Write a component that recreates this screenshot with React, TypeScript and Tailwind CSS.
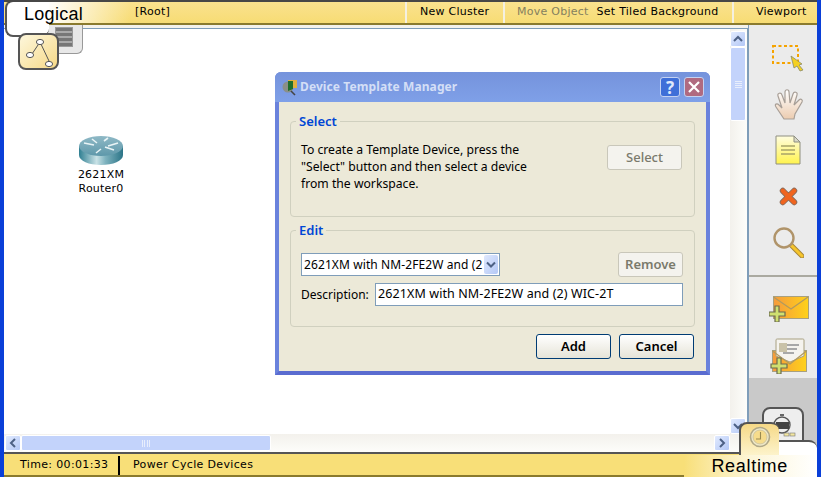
import React from "react";

const ui = "font-['DejaVu_Sans',sans-serif]";
const dlg = "font-['Noto_Sans',sans-serif]";

function ArrowBtn({ dir, className }: { dir: "up" | "down" | "left" | "right"; className?: string }) {
  const paths = {
    up: "M3 9 L7 5 L11 9",
    down: "M3 5 L7 9 L11 5",
    left: "M9 3 L5 7 L9 11",
    right: "M5 3 L9 7 L5 11",
  };
  return (
    <div className={"flex items-center justify-center rounded-[2px] border border-white bg-gradient-to-br from-[#e1eafe] to-[#b4c8f6] " + (className || "")}>
      <svg width="14" height="14" viewBox="0 0 14 14" fill="none">
        <path d={paths[dir]} stroke="#4d6185" strokeWidth="2" />
      </svg>
    </div>
  );
}

function RouterIcon() {
  return (
    <svg width="46" height="31" viewBox="0 0 46 31">
      <defs>
        <linearGradient id="rside" x1="0" x2="1" y1="0" y2="0">
          <stop offset="0" stopColor="#2f7f92" />
          <stop offset="0.4" stopColor="#c9e2e6" />
          <stop offset="0.6" stopColor="#7fb3bf" />
          <stop offset="1" stopColor="#2b7487" />
        </linearGradient>
        <linearGradient id="rtop" x1="0" x2="0" y1="0" y2="1">
          <stop offset="0" stopColor="#8fb9c6" />
          <stop offset="1" stopColor="#5e98aa" />
        </linearGradient>
      </defs>
      <path d="M1 11 V20 C1 26 11 30 23 30 C35 30 45 26 45 20 V11 Z" fill="url(#rside)" />
      <ellipse cx="23" cy="11" rx="22" ry="10" fill="url(#rtop)" />
      <path d="M6 8 L16 10 M40 8 L30 11 M23 14 L18 18 M26 6 L30 3 M27 12 L36 15 M19 8 L14 4" stroke="#e8f3f5" strokeWidth="1.6" />
    </svg>
  );
}

function LogicalIcon() {
  return (
    <svg width="30" height="34" viewBox="0 0 30 34" fill="none">
      <path d="M8 19 L16 7 L25 26" stroke="#555" strokeWidth="1" />
      <ellipse cx="16" cy="7" rx="3.6" ry="2.6" fill="#fff" stroke="#555" />
      <ellipse cx="6" cy="20" rx="3.6" ry="2.6" fill="#fff" stroke="#555" />
      <ellipse cx="25" cy="29" rx="3.6" ry="2.6" fill="#fff" stroke="#555" />
    </svg>
  );
}

function SelectIcon() {
  return (
    <svg width="34" height="28" viewBox="0 0 34 28" fill="none">
      <rect x="2" y="2" width="25" height="17" stroke="#f5a300" strokeWidth="2" strokeDasharray="3 2.5" />
      <path d="M20 12 L31 20 L28 21 L32 26 L29 27 L26 22 L23 24 Z" fill="#f4d020" stroke="#8c8c6a" strokeWidth="0.8" />
    </svg>
  );
}

function HandIcon() {
  return (
    <svg width="32" height="32" viewBox="0 0 32 32">
      <defs>
        <linearGradient id="hnd" x1="0" x2="0" y1="0" y2="1">
          <stop offset="0" stopColor="#ffffff" />
          <stop offset="1" stopColor="#ecccb0" />
        </linearGradient>
      </defs>
      <path d="M12 31 L4 19 C2 16 5 15 7 17 L10 20 L6 8 C5 5 9 4 10 7 L13 15 L13 4 C13 1 17 1 17 4 L18 15 L21 6 C22 3 26 4 25 7 L22 17 L27 12 C29 10 31 12 30 14 L23 26 L22 31 Z" fill="url(#hnd)" stroke="#a89f97" strokeWidth="1.2" />
    </svg>
  );
}

function NoteIcon() {
  return (
    <svg width="26" height="30" viewBox="0 0 26 30" fill="none">
      <defs>
        <linearGradient id="nt" x1="0" x2="0" y1="0" y2="1">
          <stop offset="0" stopColor="#fffde0" />
          <stop offset="1" stopColor="#fff34d" />
        </linearGradient>
      </defs>
      <path d="M1 1 H19 L25 7 V29 H1 Z" fill="url(#nt)" stroke="#8f8f80" />
      <path d="M19 1 V7 H25 Z" fill="#d8d8c8" stroke="#8f8f80" />
      <path d="M6 11 H20 M6 15 H20 M6 19 H20" stroke="#a9a468" strokeWidth="1.4" />
    </svg>
  );
}

function DeleteIcon() {
  return (
    <svg width="19" height="19" viewBox="0 0 20 20">
      <path d="M4 4 L16 16 M16 4 L4 16" stroke="#8a6d5c" strokeWidth="6.4" strokeLinecap="round" />
      <path d="M4 4 L16 16 M16 4 L4 16" stroke="#f0641e" strokeWidth="4.6" strokeLinecap="round" />
    </svg>
  );
}

function ZoomIcon() {
  return (
    <svg width="32" height="32" viewBox="0 0 32 32" fill="none">
      <path d="M18 18 L30 30" stroke="#a8873a" strokeWidth="5" strokeLinecap="round" />
      <path d="M18 18 L30 30" stroke="#f6c52c" strokeWidth="3" strokeLinecap="round" />
      <circle cx="12" cy="12" r="9.5" fill="#ececec" stroke="#b0946a" strokeWidth="2.4" />
    </svg>
  );
}

function Plus({ x, y }: { x: number; y: number }) {
  return (
    <g transform={`translate(${x} ${y})`}>
      <path d="M6 0 H10 V6 H16 V10 H10 V16 H6 V10 H0 V6 H6 Z" fill="#d0e070" stroke="#6b6b50" strokeWidth="1.2" />
    </g>
  );
}

function MailIcon() {
  return (
    <svg width="40" height="26" viewBox="0 0 40 26" fill="none">
      <defs>
        <linearGradient id="ml" x1="0" x2="1" y1="0" y2="0">
          <stop offset="0" stopColor="#f59a3c" />
          <stop offset="1" stopColor="#ffd21a" />
        </linearGradient>
      </defs>
      <rect x="4.5" y="0.5" width="35" height="22" fill="url(#ml)" stroke="#a8a080" />
      <path d="M4.5 1 L22 13 L39 1" stroke="#b09a60" strokeWidth="1.2" />
      <Plus x={0} y={10} />
    </svg>
  );
}

function MailOpenIcon() {
  return (
    <svg width="38" height="36" viewBox="0 0 38 36" fill="none">
      <defs>
        <linearGradient id="mo" x1="0" x2="1" y1="0" y2="0">
          <stop offset="0" stopColor="#f59a3c" />
          <stop offset="1" stopColor="#ffd21a" />
        </linearGradient>
      </defs>
      <rect x="2.5" y="12.5" width="34" height="21" fill="url(#mo)" stroke="#a8a080" />
      <path d="M6 18 V2 C6 1 7 1 8 1 H32 C33 1 34 1 34 2 V18 L20 24 Z" fill="#f5f3ee" stroke="#a8a080" />
      <rect x="9" y="5" width="8" height="9" fill="#c9c2a8" />
      <path d="M17 7 H29 M17 11 H27 M13 15 H24" stroke="#a8a8a8" strokeWidth="2" />
      <path d="M2.5 13 L20 26 L36.5 13" stroke="#b09a60" strokeWidth="1.2" />
      <Plus x={1} y={20} />
    </svg>
  );
}

function StopwatchIcon() {
  return (
    <svg width="26" height="26" viewBox="0 0 26 26" fill="none">
      <circle cx="12" cy="12" r="8" fill="#eee" stroke="#555" strokeWidth="1.4" />
      <rect x="6" y="9" width="13" height="7" fill="#444" />
      <rect x="10" y="1" width="4" height="2" fill="#666" />
      <rect x="14" y="20" width="5" height="3" fill="#f2e6a0" stroke="#777" strokeWidth="0.6" />
      <rect x="20" y="20" width="5" height="3" fill="#f2e6a0" stroke="#777" strokeWidth="0.6" />
    </svg>
  );
}

function ClockIcon() {
  return (
    <svg width="22" height="22" viewBox="0 0 22 22" fill="none">
      <circle cx="11" cy="11" r="9.5" fill="#efe9c8" stroke="#b0a888" strokeWidth="1.6" />
      <circle cx="11" cy="11" r="7" fill="#f6dc8c" stroke="#c8c0a0" strokeWidth="0.8" />
      <path d="M11.5 6 V13 H7" stroke="#9a8a50" strokeWidth="1.1" />
    </svg>
  );
}

function AppIcon() {
  return (
    <svg width="18" height="17" viewBox="0 0 18 17" fill="none">
      <circle cx="7" cy="8" r="5.5" fill="#8b8f88" />
      <path d="M10 12 L14 16" stroke="#444" strokeWidth="1.6" />
      <rect x="7" y="1" width="9" height="8" fill="#e0b040" />
      <path d="M7 2 H12 V10 L7 12 Z" fill="#1f6e2c" />
    </svg>
  );
}

function GroupBox({ title, className, children }: { title: string; className: string; children: React.ReactNode }) {
  return (
    <div className={"relative rounded-[4px] border border-[#d0d0bf] " + className}>
      <span className="absolute left-[5px] top-[-10px] bg-[#ece9d8] px-[3px] text-[13px] font-semibold leading-[18px] text-[#0046d5]">
        {title}
      </span>
      {children}
    </div>
  );
}

function Dialog() {
  return (
    <div className={"absolute left-[271px] top-[72px] flex h-[303px] w-[435px] flex-col rounded-t-[6px] border-x-[4px] border-b-[4px] border-x-[#6a82dc] border-b-[#5a6cd0] bg-[#ece9d8] " + dlg}>
      <div className="mx-[-4px] flex h-[30px] shrink-0 items-center rounded-t-[6px] bg-gradient-to-b from-[#7593dc] to-[#7fa0e8] pl-[6px] pr-[6px]">
        <AppIcon />
        <span className="ml-[1px] text-[12px] font-bold tracking-[0.1px] text-[#d4dff6]">Device Template Manager</span>
        <div className="ml-auto flex gap-[4px]">
          <div className="flex h-[20px] w-[20px] items-center justify-center rounded-[3px] border border-[#c4d2f2] bg-[#3f6fd8] text-[17px] font-bold leading-none text-[#dfe8fb]">?</div>
          <div className="flex h-[20px] w-[20px] items-center justify-center rounded-[3px] border border-[#c4d2f2] bg-[#b06a80]">
            <svg width="12" height="12" viewBox="0 0 12 12"><path d="M1 1 L11 11 M11 1 L1 11" stroke="#fff" strokeWidth="2.2" /></svg>
          </div>
        </div>
      </div>
      <div className="flex flex-1 flex-col px-[11px] pt-[19px]">
        <GroupBox title="Select" className="flex h-[96px] shrink-0 items-start pl-[10px] pr-[12px] pt-[19px]">
          <p className="w-[240px] text-[12.2px] leading-[17px] text-black">
            To create a Template Device, press the "Select" button and then select a device from the workspace.
          </p>
          <button className="ml-auto mt-[4px] h-[25px] w-[75px] rounded-[3px] border border-[#c9c7ba] bg-[#f4f3ee] text-[13px] font-medium text-[#7a7a6c]">Select</button>
        </GroupBox>
        <GroupBox title="Edit" className="mt-[13px] h-[97px] shrink-0 pl-[10px] pr-[11px] pt-[21px]">
          <div className="flex items-center justify-between">
            <div className="flex h-[23px] w-[199px] items-center overflow-hidden border border-[#7f9db9] bg-white pl-[2px]">
              <span className="w-[180px] overflow-hidden whitespace-nowrap text-[12px] tracking-[0.1px] text-black">2621XM with NM-2FE2W and (2</span>
              <div className="ml-auto mr-[1px] flex h-[19px] w-[14px] shrink-0 items-center justify-center rounded-[2px] bg-gradient-to-br from-[#dfe8fd] to-[#b4c8f6]">
                <svg width="10" height="8" viewBox="0 0 10 8" fill="none"><path d="M1 1.5 L5 5.5 L9 1.5" stroke="#4d6185" strokeWidth="2" /></svg>
              </div>
            </div>
            <button className="h-[25px] w-[65px] rounded-[3px] border border-[#c9c7ba] bg-[#f4f3ee] text-[13px] font-semibold text-[#7a7a6c]">Remove</button>
          </div>
          <div className="mt-[6px] flex items-center justify-between">
            <span className="text-[12px] text-black">Description:</span>
            <div className="flex h-[23px] w-[308px] items-center border border-[#7f9db9] bg-white pl-[2px] text-[12.5px] tracking-[0.1px] text-black">
              2621XM with NM-2FE2W and (2) WIC-2T
            </div>
          </div>
        </GroupBox>
        <div className="mt-[7px] flex justify-end gap-[8px] pr-[1px]">
          <button className="h-[25px] w-[75px] rounded-[3px] border border-[#003c74] bg-gradient-to-b from-white to-[#e6e4d8] text-[13px] font-semibold text-black">Add</button>
          <button className="h-[25px] w-[75px] rounded-[3px] border border-[#003c74] bg-gradient-to-b from-white to-[#e6e4d8] text-[13px] font-semibold text-black">Cancel</button>
        </div>
      </div>
    </div>
  );
}

export default function App() {
  return (
    <div className={"relative flex h-[477px] w-[821px] flex-col overflow-hidden border-x-[4px] border-[#0a3fd8] bg-white text-black " + ui}>
      {/* top bar */}
      <div className="flex h-[25px] shrink-0 border-b-[2px] border-t-[2px] border-b-[#8a7a2e] border-t-[#474747] bg-gradient-to-b from-[#fae28e] to-[#f7dc74] text-[11px] tracking-[0.25px]">
        <div className="flex w-[401px] items-center pl-[131px]">[Root]</div>
        <div className="flex w-[98px] items-center border-l-[2px] border-[#f4f0e0] pl-[13px]">New Cluster</div>
        <div className="flex w-[229px] items-center gap-[8px] border-l-[2px] border-[#f4f0e0] pl-[12px]">
          <span className="text-[#85805e]">Move Object</span>
          <span>Set Tiled Background</span>
        </div>
        <div className="flex flex-1 items-center border-l-[2px] border-[#f4f0e0] pl-[22px]">Viewport</div>
      </div>

      <div className="flex min-h-0 flex-1">
        {/* workspace */}
        <div className="flex w-[744px] shrink-0 flex-col bg-[#f4f2ec]">
          <div className="mt-[3px] flex min-h-0 flex-1 border-r border-t border-[#7f9db9]">
            <div className="relative flex-1 bg-white">
              <div className="absolute left-[74px] top-[106px] flex w-[46px] flex-col items-center text-[11px] leading-[14px] tracking-[0.2px]">
                <RouterIcon />
                <span className="mt-[2px]">2621XM</span>
                <span>Router0</span>
              </div>
            </div>
            <div className="flex w-[17px] shrink-0 flex-col bg-gradient-to-r from-[#f3f1ec] to-[#fdfdfa]">
              <ArrowBtn dir="up" className="mt-[2px] h-[16px] w-[16px]" />
              <div className="flex h-[74px] w-[16px] items-center justify-center rounded-[2px] border border-white bg-[#c3d3fb]">
                <div className="h-[7px] w-[7px] border-y-[3px] border-double border-[#e8eefc]" />
              </div>
              <ArrowBtn dir="down" className="mt-auto h-[16px] w-[16px]" />
            </div>
          </div>
          <div className="flex h-[18px] shrink-0 items-center bg-gradient-to-b from-[#f3f1ec] to-[#fdfdfa] pr-[18px]">
            <ArrowBtn dir="left" className="ml-[1px] h-[16px] w-[16px]" />
            <div className="flex h-[16px] w-[250px] items-center justify-center rounded-[2px] border border-white bg-[#c3d3fb]">
              <div className="h-[7px] w-[8px] border-x-[3px] border-double border-[#e8eefc]" />
            </div>
            <ArrowBtn dir="right" className="ml-auto h-[16px] w-[16px]" />
          </div>
        </div>

        {/* tool column */}
        <div className="flex flex-1 flex-col items-center border-l border-[#7f9db9] bg-[#ebebeb]">
          <div className="flex w-full flex-col pl-[10px] pt-[10px]">
            <div className="flex h-[46px] items-center justify-center"><SelectIcon /></div>
            <div className="flex h-[46px] items-center justify-center"><HandIcon /></div>
            <div className="flex h-[46px] items-center justify-center"><NoteIcon /></div>
            <div className="flex h-[46px] items-center justify-center"><DeleteIcon /></div>
            <div className="flex h-[46px] items-center justify-center"><ZoomIcon /></div>
          </div>
          <div className="mt-[10px] h-[2px] w-full shrink-0 bg-[#aaa9a0]" />
          <div className="flex h-[44px] w-full items-center justify-center pl-[12px] pt-[20px]"><MailIcon /></div>
          <div className="flex h-[57px] w-full items-center justify-center pl-[12px] pt-[13px]"><MailOpenIcon /></div>
          <div className="flex w-full flex-1 justify-center bg-[#c9c9c9] pt-[29px]">
            <div className="flex h-[44px] w-[42px] justify-center rounded-[8px] border-2 border-[#555] bg-[#eeeeee] pt-[4px]">
              <StopwatchIcon />
            </div>
          </div>
        </div>
      </div>

      {/* status bar */}
      <div className="flex h-[25px] shrink-0 items-center border-b-[2px] border-t-[2px] border-b-[#8a7a2e] border-t-[#555] bg-[#f8df78] pt-[1px] text-[11px] tracking-[0.35px]">
        <div className="flex h-[19px] w-[116px] items-center border-r-2 border-black pl-[16px]">Time: 00:01:33</div>
        <div className="pl-[13px]">Power Cycle Devices</div>
      </div>

      {/* Logical tab */}
      <div className="absolute left-[42px] top-[2px] h-[21px] w-[84px] bg-gradient-to-r from-white to-transparent" />
      <div className="absolute left-[41px] top-[25px] h-[29px] w-[38px] rounded-br-[6px] border-b border-r border-[#999] bg-[#e8e8e8] pl-[10px] pt-[2px]">
        <div className="h-[20px] w-[18px] border border-[#999] bg-[repeating-linear-gradient(180deg,#777_0px,#777_3px,#aaa_3px,#aaa_5px)]" />
      </div>
      <div className="absolute left-[1px] top-0 h-[37px] w-[44px] rounded-b-[8px] rounded-tl-[8px] border-b-2 border-l-2 border-t-2 border-[#555] border-t-[#474747] bg-white" />
      <div className="absolute left-[14px] top-[33px] flex h-[37px] w-[41px] items-center justify-center rounded-[8px] border-2 border-[#555] bg-gradient-to-br from-[#fdf7dc] to-[#f6d986]">
        <LogicalIcon />
      </div>
      <div className="absolute left-[20px] top-[2px] font-['Liberation_Sans',sans-serif] text-[18px] leading-[24px] tracking-[0.3px]">Logical</div>

      {/* Realtime tab */}
      <div className="absolute left-[735px] top-[422px] flex h-[34px] w-[40px] justify-center rounded-t-[8px] border-l-2 border-t-2 border-[#555] bg-gradient-to-b from-[#f6d986] to-[#fdf4cd] pt-[2px]">
        <ClockIcon />
      </div>
      <div className="absolute left-[775px] top-[440px] h-[16px] w-[38px] rounded-tr-[8px] border-t-2 border-[#555] bg-white" />
      <div className="absolute bottom-0 left-[680px] flex h-[22px] w-[133px] items-center justify-end bg-gradient-to-r from-[#f8df78] via-[#fdf6d8] to-white pr-[29px] font-['Liberation_Sans',sans-serif] text-[18px] tracking-[0.7px]">
        Realtime
      </div>

      <Dialog />
    </div>
  );
}
